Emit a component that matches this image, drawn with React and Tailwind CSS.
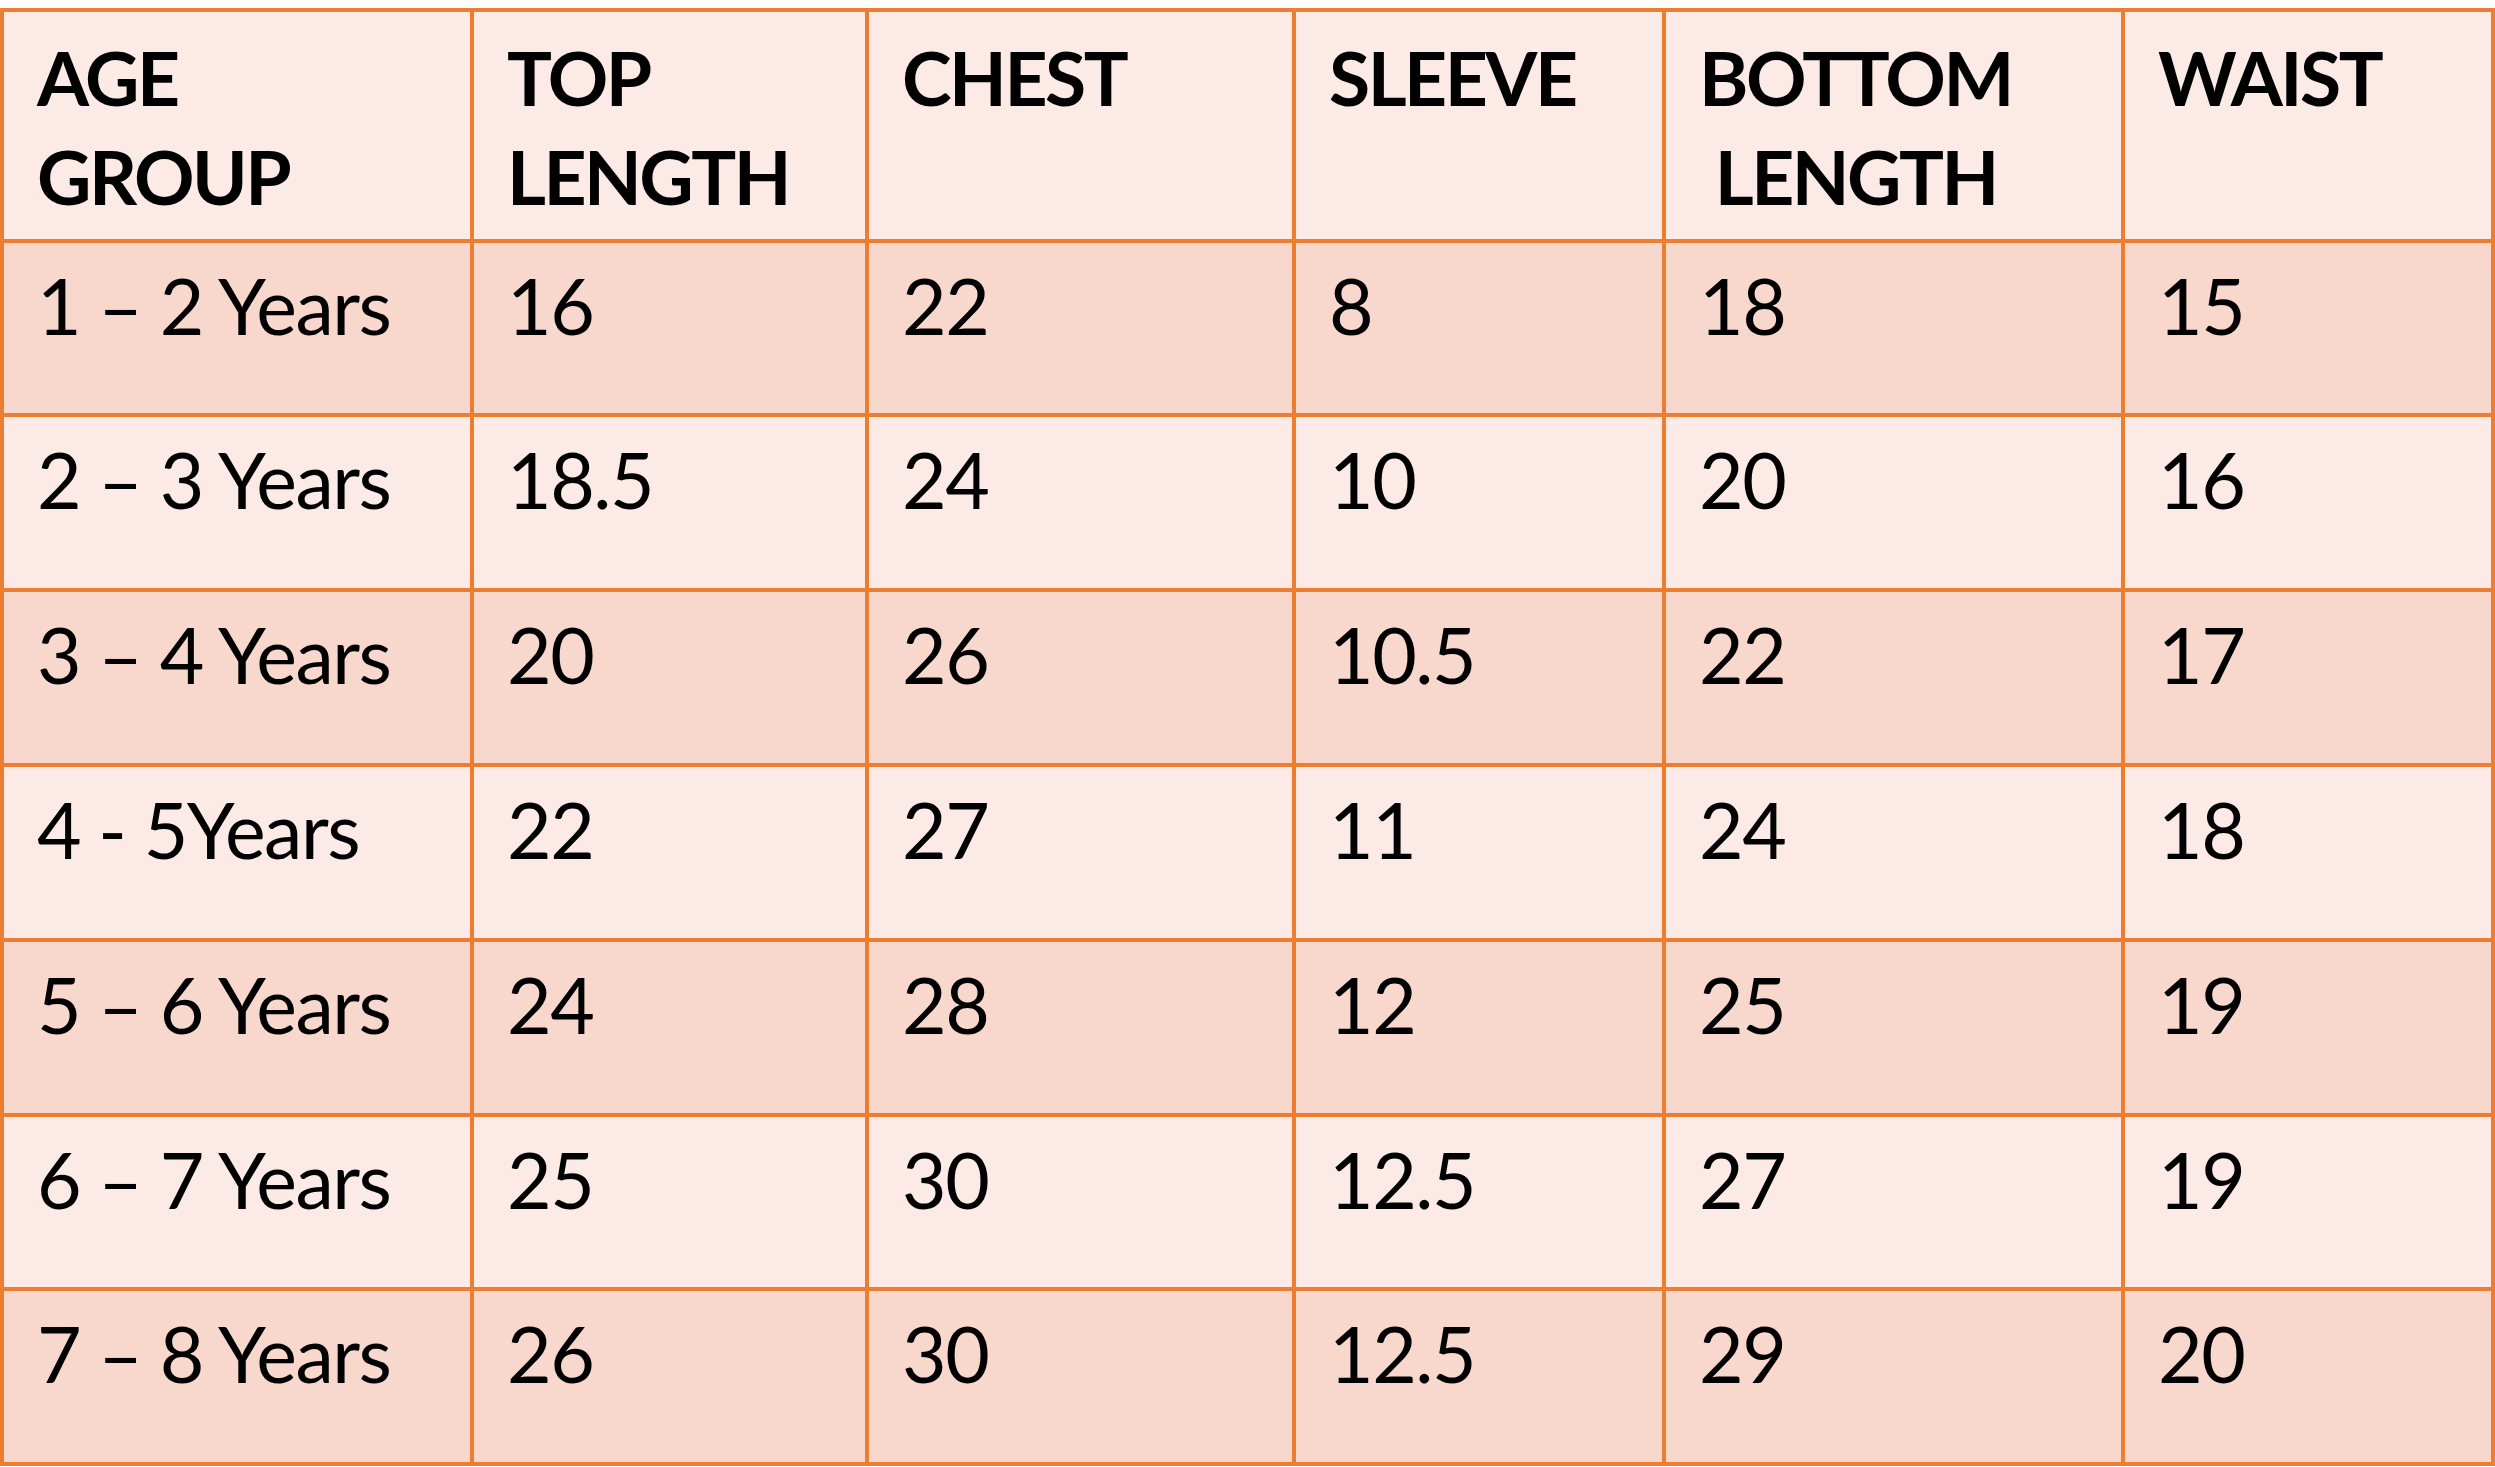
const COLS = ['AGE\nGROUP', 'TOP\nLENGTH', 'CHEST', 'SLEEVE', 'BOTTOM\n\u00a0LENGTH', 'WAIST'];

const ROWS = [
  ['1 – 2 Years', '16', '22', '8', '18', '15'],
  ['2 – 3 Years', '18.5', '24', '10', '20', '16'],
  ['3 – 4 Years', '20', '26', '10.5', '22', '17'],
  ['4 - 5Years', '22', '27', '11', '24', '18'],
  ['5 – 6 Years', '24', '28', '12', '25', '19'],
  ['6 – 7 Years', '25', '30', '12.5', '27', '19'],
  ['7 – 8 Years', '26', '30', '12.5', '29', '20'],
];

export default function App() {
  return (
    <div className="bg-white w-[2495px] h-[1467px] pt-[8px] font-['Lato',sans-serif] text-black">
      <div className="grid grid-cols-[470px_395px_427px_370px_459px_370px] grid-rows-[231px_174px_175px_175px_175px_175px_174px_175px] border-l-4 border-t-4 border-[#ED7D31] w-[2495px]">
        {/* Header */}
        {COLS.map(c => (
          <div
            key={c}
            className="border-r-4 border-b-4 border-[#ED7D31] bg-[#FBEAE6] pl-[33px] pt-[16px] text-[75px] leading-[99px] tracking-[-2.5px] font-bold whitespace-pre-line"
          >
            {c}
          </div>
        ))}

        {/* Body */}
        {ROWS.map((row, i) =>
          row.map((v, j) => (
            <div
              key={`${i}-${j}`}
              className={`border-r-4 border-b-4 border-[#ED7D31] pl-[33px] pt-[13px] text-[77px] leading-[99px] tracking-[-1.5px] ${i % 2 === 0 ? 'bg-[#F8D8CD]' : 'bg-[#FBEAE6]'}`}
            >
              {v}
            </div>
          ))
        )}
      </div>
    </div>
  );
}
